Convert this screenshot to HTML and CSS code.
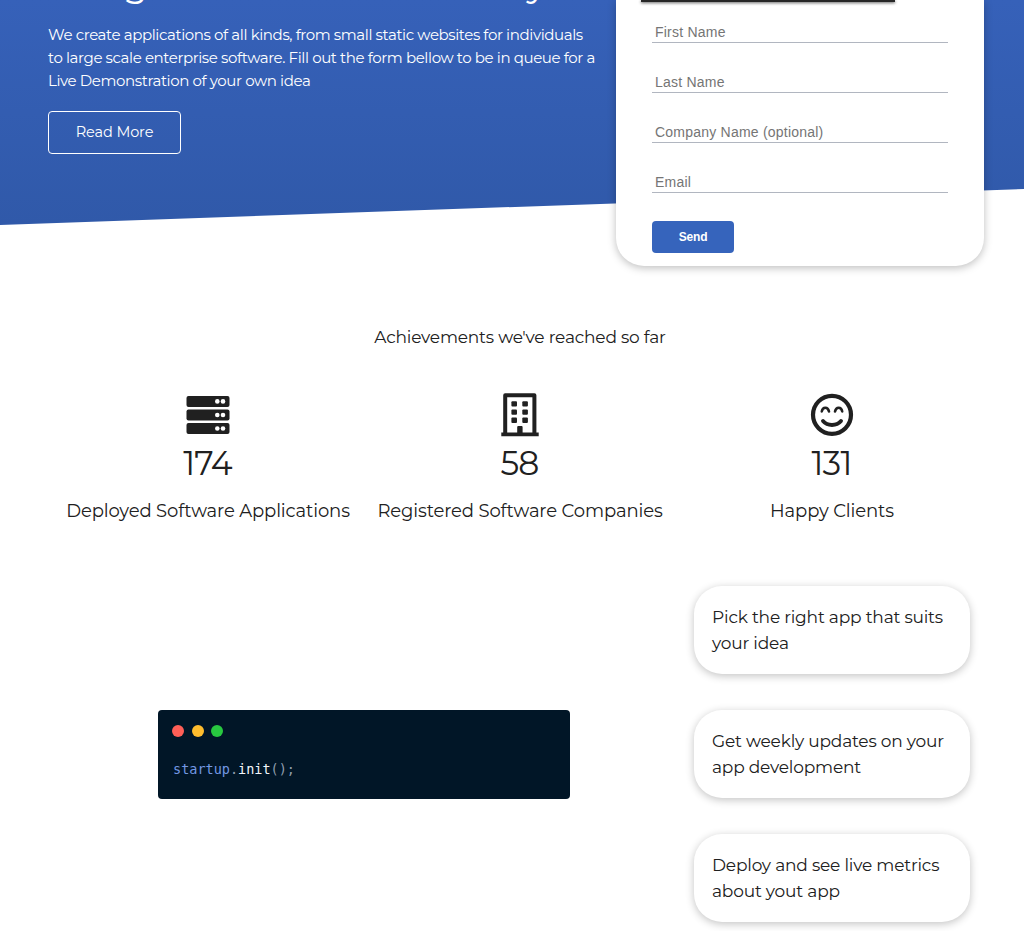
FILE: index.html
```
<!DOCTYPE html>
<html lang="en">
<head>
<meta charset="utf-8">
<title>Startup</title>
<link rel="stylesheet" href="styles.css">
</head>
<body>
<header class="hero">
  <div class="intro">
    <h1 class="title">Bring Your Ideas To Reality</h1>
    <p class="lead">We create applications of all kinds, from small static websites for individuals<br>to large scale enterprise software. Fill out the form bellow to be in queue for a<br>Live Demonstration of your own idea</p>
    <a class="more" href="#more">Read More</a>
  </div>
  <form class="card">
    <div class="banner"></div>
    <input class="field" placeholder="First Name">
    <input class="field" placeholder="Last Name">
    <input class="field" placeholder="Company Name (optional)">
    <input class="field" placeholder="Email">
    <button class="send" type="button">Send</button>
  </form>
</header>
<section class="stats">
  <h2 class="heading">Achievements we've reached so far</h2>
  <div class="columns">
    <div class="stat">
      <svg class="icon" viewBox="0 0 44 44"><g fill="#202020"><rect x="0.5" y="3" width="43" height="11" rx="2"/><rect x="0.5" y="16.5" width="43" height="11" rx="2"/><rect x="0.5" y="30" width="43" height="11" rx="2"/></g><g fill="#fff"><circle cx="31.3" cy="8.4" r="2.3"/><circle cx="37" cy="8.4" r="2.3"/><circle cx="31.3" cy="22" r="2.3"/><circle cx="37" cy="22" r="2.3"/><circle cx="31.3" cy="35.5" r="2.3"/><circle cx="37" cy="35.5" r="2.3"/></g></svg>
      <div class="number">174</div>
      <div class="label">Deployed Software Applications</div>
    </div>
    <div class="stat">
      <svg class="icon" viewBox="0 0 44 44"><path fill="none" stroke="#202020" stroke-width="4" stroke-linejoin="round" d="M7.2 41V2.3h29.2V41"/><path fill="#202020" d="M3.3 39.4h37.4v3.8H3.3zM19.2 34q0-1 1-1h3.4q1 0 1 1v7h-5.4z"/><g fill="#202020"><rect x="13.4" y="8.2" width="5.6" height="5.4" rx="1"/><rect x="24.3" y="8.2" width="5.6" height="5.4" rx="1"/><rect x="13.4" y="16.4" width="5.6" height="5.4" rx="1"/><rect x="24.3" y="16.4" width="5.6" height="5.4" rx="1"/><rect x="13.4" y="24.6" width="5.6" height="5.4" rx="1"/><rect x="24.3" y="24.6" width="5.6" height="5.4" rx="1"/></g></svg>
      <div class="number">58</div>
      <div class="label">Registered Software Companies</div>
    </div>
    <div class="stat">
      <svg class="icon" viewBox="0 0 44 44" fill="none" stroke="#202020" stroke-linecap="round"><circle cx="22" cy="21.8" r="19" stroke-width="4.2"/><path stroke-width="3.9" d="M13 28C17.5 33.3 26.5 33.3 31 28"/><path stroke-width="2.6" d="M11.8 18.4C12.6 13.5 18 13.5 19 18.4M25 18.4C26 13.5 31.4 13.5 32.2 18.4"/></svg>
      <div class="number">131</div>
      <div class="label">Happy Clients</div>
    </div>
  </div>
</section>
<section class="steps">
  <div class="code">
    <div class="dots"><i class="dot red"></i><i class="dot yellow"></i><i class="dot green"></i></div>
    <code class="line"><span class="obj">startup</span><span class="punct">.</span><span class="call">init</span><span class="punct">();</span></code>
  </div>
  <div class="list">
    <div class="step">Pick the right app that suits<br>your idea</div>
    <div class="step">Get weekly updates on your<br>app development</div>
    <div class="step">Deploy and see live metrics<br>about yout app</div>
  </div>
</section>
</body>
</html>
```
FILE: styles.css
```
* { box-sizing: border-box; }
body { margin: 0; height: 931px; overflow: hidden; background: #fff; color: #202020; font-family: Montserrat, Inter, sans-serif; }
.hero { position: relative; display: flex; justify-content: space-between; height: 266px; padding: 0 40px 0 48px; }
.hero::before { content: ""; position: absolute; inset: 0 0 41px; z-index: -1; background: linear-gradient(#3661b9, #3059a9); clip-path: polygon(0 0, 100% 0, 100% 189px, 0 225px); }
.intro { width: 560px; color: #fff; white-space: nowrap; }
.title { margin: -38px 0 0; height: 44px; font-size: 36px; line-height: 44px; font-weight: 400; word-spacing: 5.5px; }
.lead { margin: 17px 0 0; font-size: 15px; line-height: 23px; font-weight: 400; letter-spacing: -.39px; }
.more { display: flex; align-items: center; justify-content: center; width: 133px; height: 43px; margin-top: 19px; padding-bottom: 2px; border: 1px solid #fff; border-radius: 4px; color: #fff; font-size: 14.5px; font-weight: 400; letter-spacing: -.1px; text-decoration: none; }
.card { width: 368px; height: 266px; padding: 0 36px; border-radius: 0 0 28px 28px; background: #fff; box-shadow: 0 2px 8px rgba(0,0,0,.26); }
.banner { width: 254px; height: 2px; margin: 0 0 19px -11px; background: #272727; box-shadow: 0 1px 3px rgba(0,0,0,.7); }
.field { display: block; width: 296px; height: 22px; margin: 0 0 28px; padding: 0 3px; border: 0; border-bottom: 1px solid #b1b6c0; outline: 0; background: none; font: 14px "Liberation Sans", Arial, sans-serif; letter-spacing: .22px; }
.field::placeholder { color: #757575; }
.send { display: block; width: 82px; height: 32px; border: 0; border-radius: 4px; background: #3664bc; color: #fff; font: bold 12px "Liberation Sans", Arial, sans-serif; letter-spacing: -.2px; }
.heading { margin: 59px 0 0 16px; font-size: 17px; line-height: 24px; font-weight: 400; letter-spacing: -.19px; text-align: center; }
.columns { display: grid; grid-template-columns: repeat(3, 312px); margin: 44px 0 0 52px; }
.stat { display: flex; flex-direction: column; align-items: center; white-space: nowrap; }
.icon { width: 44px; height: 44px; }
.number { height: 40px; margin-top: 6px; padding-right: 1px; font-size: 33px; line-height: 40px; font-weight: 400; letter-spacing: -.8px; }
.label { margin-top: 15px; font-size: 18px; line-height: 26px; letter-spacing: -.13px; }
.steps { display: flex; align-items: flex-start; justify-content: space-between; padding: 62px 54px 0 158px; }
.code { width: 412px; height: 89px; margin-top: 124px; padding: 15px; border-radius: 4px; background: #011627; }
.dots { display: flex; gap: 7.5px; margin-left: -1px; }
.dot { width: 12px; height: 12px; border-radius: 50%; }
.red { background: #ff5f57; }
.yellow { background: #ffbd2e; }
.green { background: #28c840; }
.line { display: block; margin-top: 23px; font: 13.5px/18px "DejaVu Sans Mono", monospace; }
.obj { color: #7398e3; }
.punct { color: #8f9dad; }
.call { color: #f2f6fa; }
.list { display: grid; gap: 36px; width: 276px; }
.step { height: 88px; padding: 18px; border-radius: 28px; background: #fff; box-shadow: 0 2px 8px rgba(0,0,0,.24); font-size: 17px; line-height: 26px; letter-spacing: -.19px; white-space: nowrap; }
```
